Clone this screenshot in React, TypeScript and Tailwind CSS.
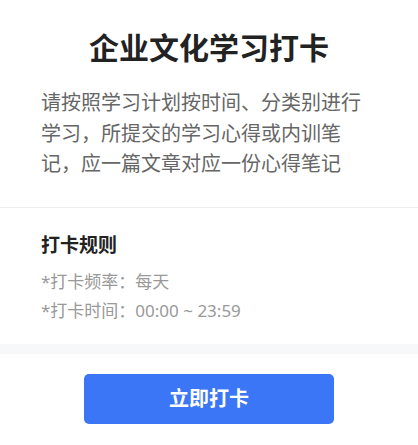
export default function App() {
  return (
    <div className="w-[418px] h-[445px] bg-white font-['Noto_Sans','Noto_Sans_CJK_SC',sans-serif] flex flex-col">
      <div className="px-[41px] pt-[26px] pb-[27px] border-b border-[#eeeeee]">
        <h1 className="text-center text-[30px] leading-[40px] font-bold text-[#222222] font-['Noto_Sans_CJK_SC',sans-serif]">
          企业文化学习打卡
        </h1>
        <p className="mt-[22px] text-[20px] leading-[30.5px] text-[#666666]">
          请按照学习计划按时间、分类别进行学习，所提交的学习心得或内训笔记，应一篇文章对应一份心得笔记
        </p>
      </div>
      <div className="px-[41px] pt-[24px] pb-[19px]">
        <h2 className="text-[19px] leading-[26px] font-bold text-[#222222]">打卡规则</h2>
        <div className="mt-[9px] text-[17px] leading-[29px] text-[#999999]">
          <p>*打卡频率：每天</p>
          <p>*打卡时间：00:00 ~ 23:59</p>
        </div>
      </div>
      <div className="h-[10px] bg-[#f7f8fa]" />
      <div className="flex justify-center pt-[20px]">
        <button className="w-[250px] h-[50px] rounded-[5px] bg-[#3b76f6] text-white text-[20px] font-semibold">
          立即打卡
        </button>
      </div>
    </div>
  );
}
